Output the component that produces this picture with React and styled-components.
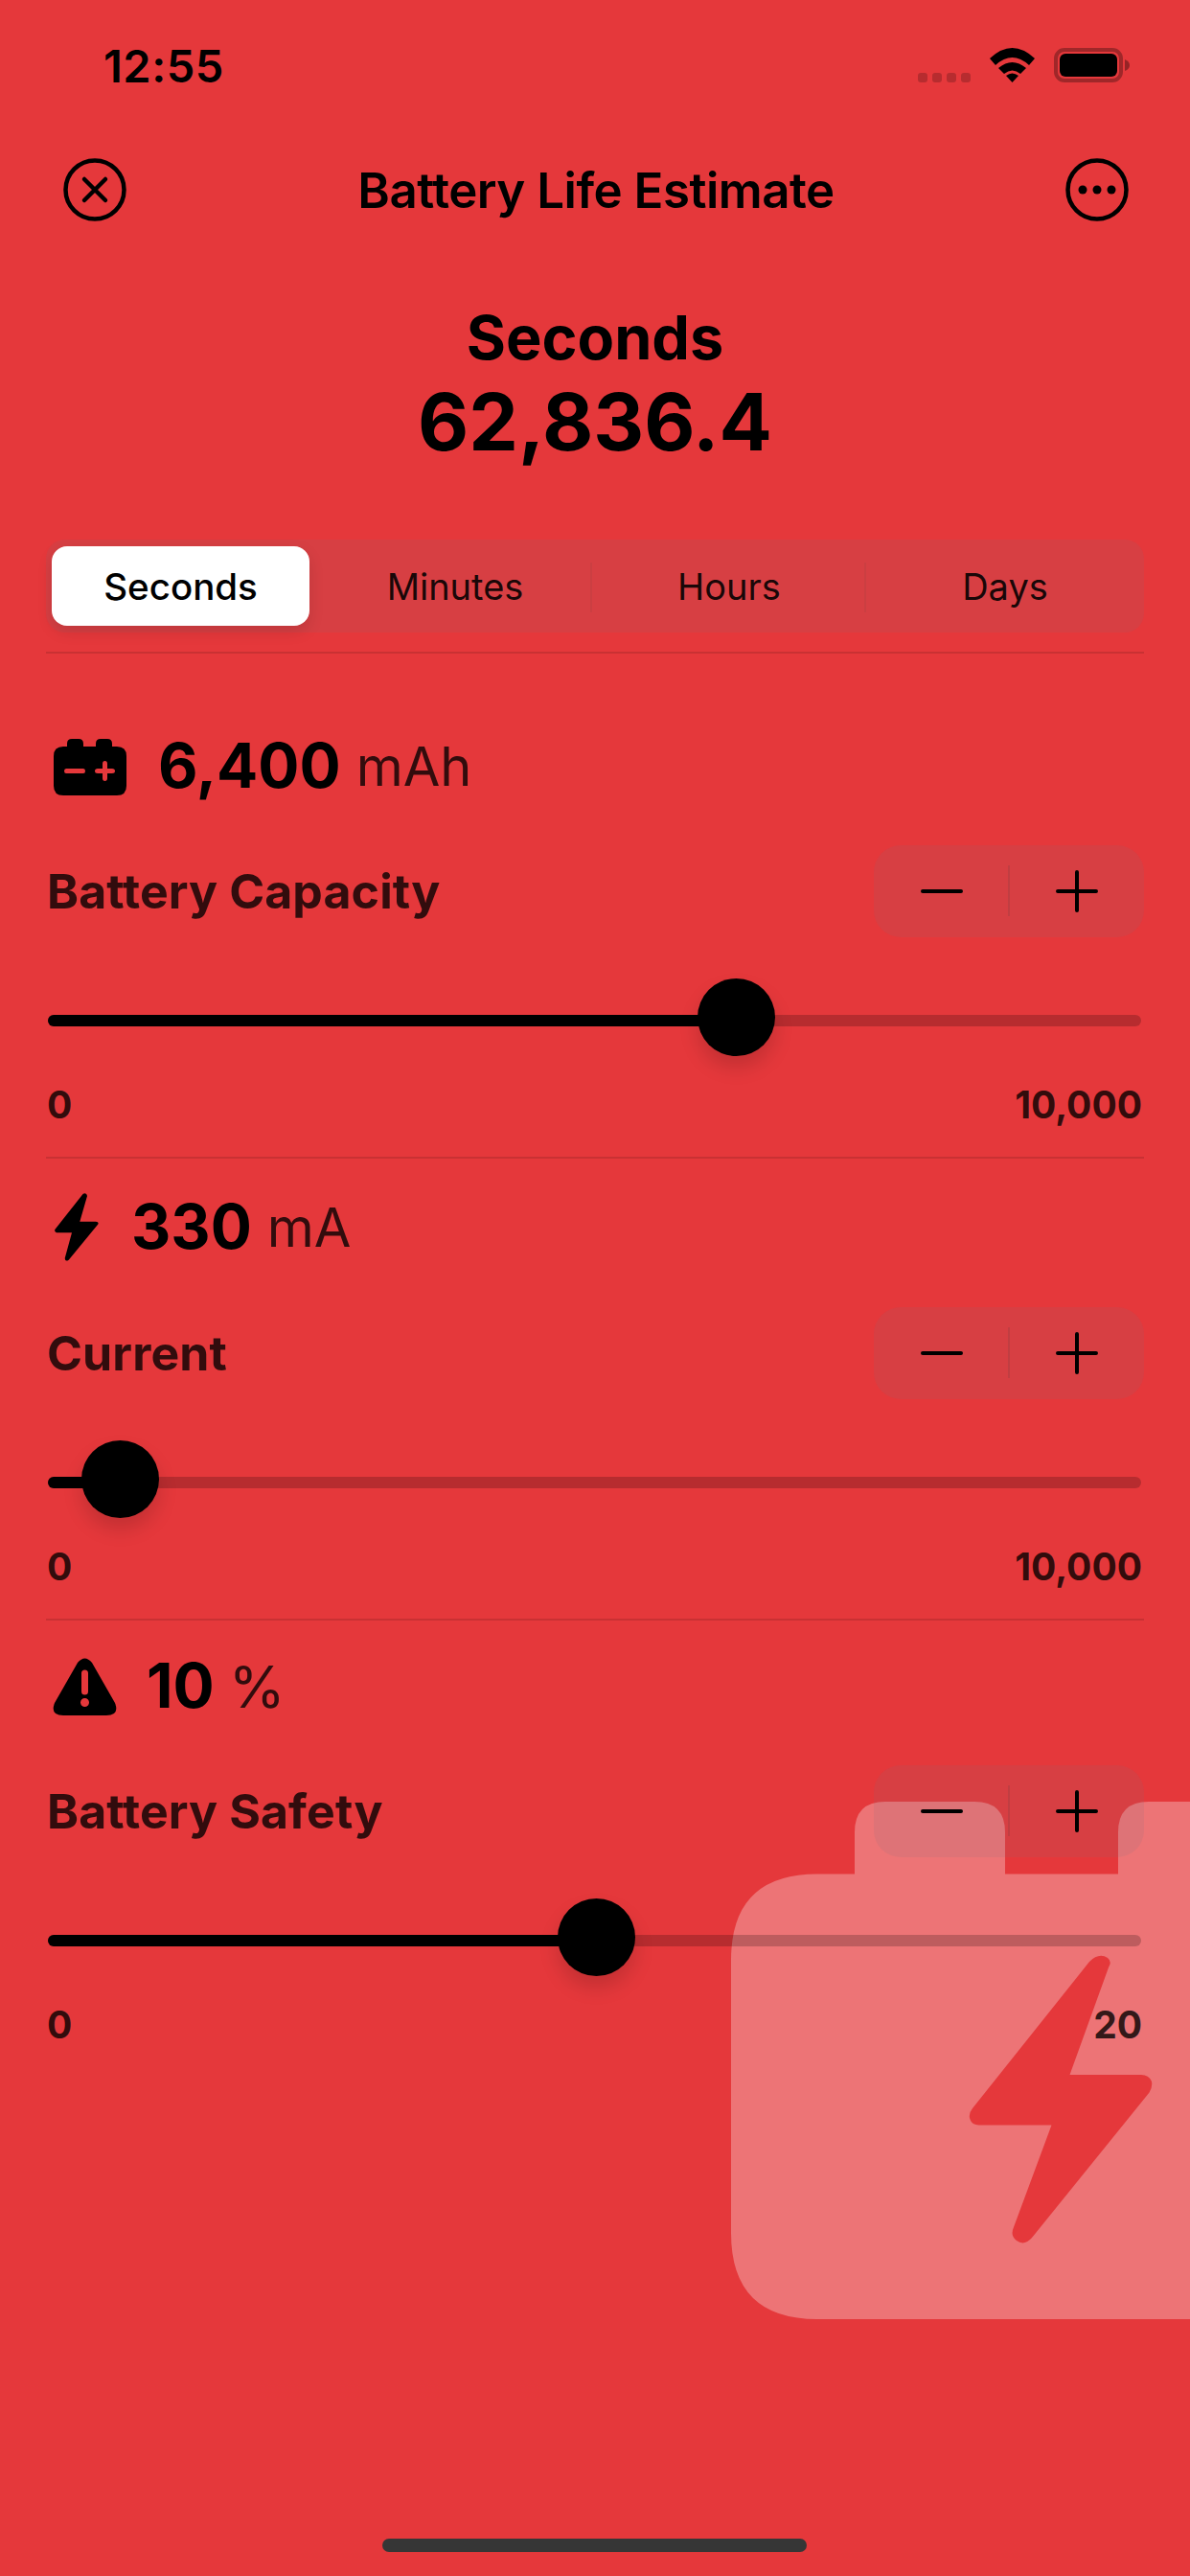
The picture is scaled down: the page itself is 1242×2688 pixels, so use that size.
import React from "react";
import styled, { createGlobalStyle } from "styled-components";

const Global = createGlobalStyle`
  html, body { margin: 0; padding: 0; background: #E5383B; }
  * { box-sizing: border-box; }
`;

const Screen = styled.div`
  position: relative;
  width: 1242px;
  height: 2688px;
  overflow: hidden;
  background: #E5383B;
  color: #000;
  font-family: Inter, "Liberation Sans", sans-serif;
`;
const BackdropArt = styled.svg`
  position: absolute;
  left: 763px;
  top: 1880px;
  width: 479px;
  height: 540px;
`;
const Content = styled.div`
  position: relative;
  display: flex;
  flex-direction: column;
  padding: 0 48px;
`;
const StatusBar = styled.div`
  height: 136px;
  display: flex;
  align-items: center;
  justify-content: space-between;
  padding: 0 15px 0 60px;
`;
const Clock = styled.div`
  font-size: 47px;
  font-weight: 600;
  letter-spacing: 0.5px;
`;
const StatusIcons = styled.div`
  display: flex;
  align-items: flex-start;
`;
const SignalDots = styled.div`
  display: flex;
  gap: 5px;
  margin: 26px 20px 0 0;
`;
const SignalDot = styled.span`
  width: 10px;
  height: 10px;
  border-radius: 3px;
  background: rgba(0, 0, 0, 0.2);
`;
const Wifi = styled.svg`
  width: 47px;
  height: 36px;
  margin-right: 20px;
`;
const BatteryStatus = styled.svg`
  width: 79px;
  height: 36px;
`;
const NavBar = styled.div`
  height: 124px;
  display: flex;
  align-items: center;
  justify-content: space-between;
  padding: 0 16px 0 18px;
`;
const NavIcon = styled.svg`
  width: 66px;
  height: 66px;
  display: block;
`;
const NavTitle = styled.div`
  font-size: 51px;
  font-weight: 600;
  letter-spacing: -0.5px;
`;
const ResultTitle = styled.div`
  margin-top: 57px;
  height: 70px;
  line-height: 70px;
  text-align: center;
  font-size: 63px;
  font-weight: 700;
`;
const ResultValue = styled.div`
  margin-top: 4px;
  height: 100px;
  line-height: 100px;
  text-align: center;
  font-size: 82px;
  font-weight: 700;
`;
const Segments = styled.div`
  margin-top: 72px;
  height: 97px;
  display: grid;
  grid-template-columns: 284px 286px 286px 1fr;
  border-radius: 20px;
  background: rgba(118, 118, 128, 0.12);
`;
const Segment = styled.div`
  position: relative;
  display: flex;
  align-items: center;
  justify-content: center;
  font-size: ${(p) => (p.$active ? 38.5 : 38)}px;
  font-weight: ${(p) => (p.$active ? 500 : 400)};
  color: ${(p) => (p.$active ? "#000" : "rgba(0,0,0,0.9)")};
  background: ${(p) => (p.$active ? "#fff" : "transparent")};
  margin: ${(p) => (p.$active ? "7px 9px 7px 6px" : "0")};
  border-radius: 16px;
  box-shadow: ${(p) => (p.$active ? "0 6px 16px rgba(0,0,0,0.12)" : "none")};
  &::after {
    content: "";
    display: ${(p) => (p.$divider ? "block" : "none")};
    position: absolute;
    right: 0;
    top: 24px;
    bottom: 21px;
    width: 2px;
    background: rgba(60, 60, 67, 0.08);
  }
`;
const Rule = styled.div`
  height: 2px;
  background: rgba(0, 0, 0, 0.12);
`;
const Section = styled.section`
  padding: ${(p) => p.$top}px 0 34px;
  display: flex;
  flex-direction: column;
`;
const ValueRow = styled.div`
  height: 80px;
  padding-bottom: 4px;
  display: flex;
  align-items: center;
`;
const ValueIcon = styled.svg`
  flex: none;
  display: block;
  margin-left: ${(p) => p.$left}px;
  margin-right: ${(p) => p.$right}px;
  margin-top: 4px;
  width: ${(p) => p.$w}px;
  height: ${(p) => p.$h}px;
`;
const Amount = styled.span`
  font-size: 64px;
  font-weight: 700;
`;
const Unit = styled.span`
  margin-left: ${(p) => p.$gap}px;
  font-size: ${(p) => p.$size}px;
  font-weight: 400;
  color: rgba(0, 0, 0, 0.78);
  position: relative;
  top: 2px;
`;
const LabelRow = styled.div`
  margin-top: ${(p) => p.$gap}px;
  display: flex;
  align-items: center;
  justify-content: space-between;
`;
const Label = styled.div`
  margin-left: 1px;
  font-size: 50px;
  font-weight: 700;
  letter-spacing: 0.1px;
  color: rgba(0, 0, 0, 0.78);
`;
const Stepper = styled.div`
  width: 282px;
  height: 96px;
  display: grid;
  grid-template-columns: 1fr 1fr;
  border-radius: 28px;
  background: rgba(118, 118, 128, 0.12);
`;
const StepButton = styled.div`
  position: relative;
  display: flex;
  align-items: center;
  justify-content: center;
  &::after {
    content: "";
    display: ${(p) => (p.$divider ? "block" : "none")};
    position: absolute;
    right: -1px;
    top: 21px;
    bottom: 22px;
    width: 2px;
    background: rgba(60, 60, 67, 0.14);
  }
`;
const StepIcon = styled.svg`
  width: 44px;
  height: 44px;
  display: block;
`;
const SliderBox = styled.div`
  position: relative;
  margin: 43px 3px 0 2px;
  height: 81px;
`;
const Track = styled.div`
  position: absolute;
  left: 0;
  right: 0;
  top: 38px;
  height: 12px;
  border-radius: 6px;
  overflow: hidden;
  background: rgba(0, 0, 0, 0.2);
`;
const TrackFill = styled.div`
  height: 100%;
  background: #000;
`;
const Thumb = styled.div`
  position: absolute;
  top: 0;
  width: 81px;
  height: 81px;
  border-radius: 50%;
  background: #000;
  box-shadow: 0 12px 20px rgba(0, 0, 0, 0.15);
`;
const RangeRow = styled.div`
  margin: 31px 2px 0 1px;
  height: 40px;
  line-height: 40px;
  display: flex;
  justify-content: space-between;
  font-size: 39px;
  font-weight: 700;
  color: rgba(0, 0, 0, 0.8);
`;
const HomeBar = styled.div`
  position: absolute;
  left: 399px;
  top: 2649px;
  width: 443px;
  height: 14px;
  border-radius: 7px;
  background: #363636;
`;

const CloseIcon = () => (
  <NavIcon viewBox="0 0 66 66" fill="none" stroke="#000">
    <circle cx="33" cy="33" r="30.5" strokeWidth="4.5" />
    <path d="M22 22 L44 44 M44 22 L22 44" strokeWidth="4.5" strokeLinecap="round" />
  </NavIcon>
);
const MoreIcon = () => (
  <NavIcon viewBox="0 0 66 66">
    <circle cx="33" cy="33" r="30.5" fill="none" stroke="#000" strokeWidth="4.5" />
    <circle cx="18" cy="33" r="4.5" />
    <circle cx="33" cy="33" r="4.5" />
    <circle cx="48" cy="33" r="4.5" />
  </NavIcon>
);
const MinusIcon = () => (
  <StepIcon viewBox="0 0 44 44">
    <path d="M2 22 H42" stroke="#000" strokeWidth="4" strokeLinecap="round" />
  </StepIcon>
);
const PlusIcon = () => (
  <StepIcon viewBox="0 0 44 44">
    <path d="M2 22 H42 M22 2 V42" stroke="#000" strokeWidth="4" strokeLinecap="round" />
  </StepIcon>
);
const CarBattery = () => (
  <ValueIcon $left={8} $right={33} $w={76} $h={59} viewBox="0 0 76 59">
    <path
      fillRule="evenodd"
      d="M14 8 V5 Q14 0 19 0 H26 Q31 0 31 5 V8 H44 V5 Q44 0 49 0 H56 Q61 0 61 5 V8 H66 Q76 8 76 18 V49 Q76 59 66 59 H10 Q0 59 0 49 V18 Q0 8 10 8 Z
      M13 31 Q11 31 11 33.5 Q11 36 13 36 H31 Q33 36 33 33.5 Q33 31 31 31 Z
      M46 31 Q43 31 43 33.5 Q43 36 46 36 H51 V41 Q51 44 53.5 44 Q56 44 56 41 V36 H61 Q64 36 64 33.5 Q64 31 61 31 H56 V26 Q56 23 53.5 23 Q51 23 51 26 V31 Z"
    />
  </ValueIcon>
);
const Bolt = () => (
  <ValueIcon $left={9} $right={34} $w={46} $h={72} viewBox="0 0 46 72">
    <path d="M29.7 .7 Q33.500 -1 34 3 L26.300 29.700 H43 Q46.500 30 45.300 32.500 L14.700 69.700 Q11 72 10.700 68 L18 41.300 H2 Q-.5 40.500 .3 38 Z" />
  </ValueIcon>
);
const Warning = () => (
  <ValueIcon $left={7} $right={31} $w={67} $h={60} viewBox="0 0 67 60">
    <path
      fillRule="evenodd"
      d="M26 5 Q33.500 -4 41 5 L65 47 Q70 60 56 60 H11 Q-3 60 2 47 Z
      M30 16 V35 Q30 38.500 33.500 38.500 Q37 38.500 37 35 V16 Q37 12.500 33.500 12.500 Q30 12.500 30 16 Z
      M33.500 42 A4.500 4.500 0 1 0 33.500 51 A4.500 4.500 0 1 0 33.500 42 Z"
    />
  </ValueIcon>
);

const sections = [
  { top: 78, gap: 42, icon: <CarBattery />, amount: "6,400", unit: "mAh", unitGap: 16, unitSize: 56, label: "Battery Capacity", value: 6400, max: 10000, maxLabel: "10,000", rule: true },
  { top: 32, gap: 43, icon: <Bolt />, amount: "330", unit: "mA", unitGap: 16, unitSize: 56, label: "Current", value: 330, max: 10000, maxLabel: "10,000", rule: true },
  { top: 29, gap: 42, icon: <Warning />, amount: "10", unit: "%", unitGap: 15, unitSize: 60, label: "Battery Safety", value: 10.04, max: 20, maxLabel: "20", rule: false },
];

const Slider = ({ value, max }) => {
  const ratio = value / max;
  return (
    <SliderBox>
      <Track>
        <TrackFill style={{ width: `${ratio * 100}%` }} />
      </Track>
      <Thumb style={{ left: `${ratio * 1060}px` }} />
    </SliderBox>
  );
};

export default function App() {
  return (
    <Screen>
      <Global />
      <BackdropArt viewBox="0 0 479 540" aria-hidden="true">
        <path
          fill="#fff"
          fillOpacity="0.3"
          fillRule="evenodd"
          d="M129 75.500 V32 Q129 0 161 0 H254 Q286 0 286 32 V75.500 H404 V32 Q404 0 436 0 H479 V540 H90 Q0 540 0 450 V165.500 Q0 75.500 90 75.500 Z
          M374 167 Q384 157 393 163 Q398 167 394 173 L353.500 285 H428 Q436 285 439 292 Q440 298 436.500 303.500 L314 455 Q306 464 298 458 Q291 453 295 444 L334.500 337.500 H258.500 Q251 337.500 249 330 Q248 325 252 320 Z"
        />
      </BackdropArt>
      <Content>
        <StatusBar>
          <Clock>12:55</Clock>
          <StatusIcons>
            <SignalDots>
              <SignalDot />
              <SignalDot />
              <SignalDot />
              <SignalDot />
            </SignalDots>
            <Wifi viewBox="0 0 47 36">
              <path d="M0 11 Q23.500 -11 47 11 L41 18 Q23.500 2 6 18 Z" />
              <path d="M9 21 Q23.500 9 38 21 L32 27 Q23.500 20 15 27 Z" />
              <path d="M17 29 Q23.500 24 30 29 L23.500 36 Z" />
            </Wifi>
            <BatteryStatus viewBox="0 0 79 36">
              <rect x="2" y="2" width="68" height="32" rx="9" fill="none" stroke="#000" strokeOpacity="0.3" strokeWidth="4" />
              <rect x="6" y="6" width="60" height="24" rx="6" />
              <path d="M74 12 Q79 14 79 18 Q79 22 74 24 Z" fillOpacity="0.35" />
            </BatteryStatus>
          </StatusIcons>
        </StatusBar>
        <NavBar>
          <CloseIcon />
          <NavTitle>Battery Life Estimate</NavTitle>
          <MoreIcon />
        </NavBar>
        <ResultTitle>Seconds</ResultTitle>
        <ResultValue>62,836.4</ResultValue>
        <Segments>
          <Segment $active>Seconds</Segment>
          <Segment $divider>Minutes</Segment>
          <Segment $divider>Hours</Segment>
          <Segment>Days</Segment>
        </Segments>
        <Rule style={{ marginTop: 20 }} />
        {sections.map((s) => (
          <React.Fragment key={s.label}>
            <Section $top={s.top}>
              <ValueRow>
                {s.icon}
                <Amount>{s.amount}</Amount>
                <Unit $gap={s.unitGap} $size={s.unitSize}>{s.unit}</Unit>
              </ValueRow>
              <LabelRow $gap={s.gap}>
                <Label>{s.label}</Label>
                <Stepper>
                  <StepButton $divider><MinusIcon /></StepButton>
                  <StepButton><PlusIcon /></StepButton>
                </Stepper>
              </LabelRow>
              <Slider value={s.value} max={s.max} />
              <RangeRow>
                <span>0</span>
                <span>{s.maxLabel}</span>
              </RangeRow>
            </Section>
            {s.rule && <Rule />}
          </React.Fragment>
        ))}
      </Content>
      <HomeBar />
    </Screen>
  );
}
